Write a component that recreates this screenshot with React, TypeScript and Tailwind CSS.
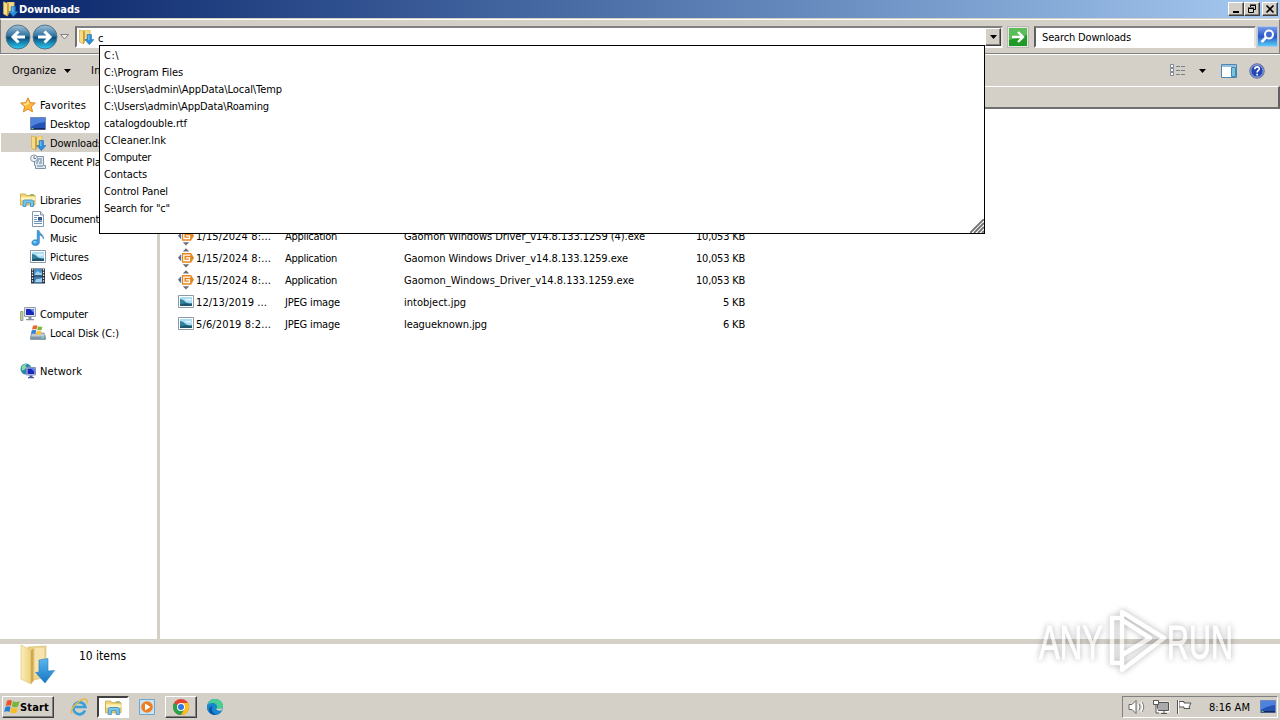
import { useLayoutEffect, useRef } from "react";
import type { ReactNode } from "react";

type LabelProps = { text: string; w: number; className?: string };

// Spreads the letters so the label takes exactly `w` pixels
function Label({ text, w, className = "pt-[2px]" }: LabelProps) {
  const ref = useRef<HTMLSpanElement>(null);
  useLayoutEffect(() => {
    const el = ref.current;
    if (!el) return;
    el.style.letterSpacing = "0px";
    const natural = el.getBoundingClientRect().width;
    el.style.letterSpacing = `${(w - natural) / text.length}px`;
  }, [text, w]);
  return (
    <span ref={ref} className={`inline-block shrink-0 whitespace-pre ${className}`}>
      {text}
    </span>
  );
}

function Icon({ size = 16, children }: { size?: number; children: ReactNode }) {
  return (
    <svg width={size} height={size} viewBox="0 0 16 16" className="block shrink-0">
      {children}
    </svg>
  );
}

function DownloadsIcon() {
  return (
    <Icon>
      <path d="M5 1h7.500v11H5z" fill="#e3bf5c" />
      <path d="M6.500 1.500h5v9h-5z" fill="#f3da8c" />
      <path d="M1.500.800 5.500 2.500V15L1.500 13z" fill="#f5dc87" stroke="#d0ab4a" strokeWidth=".7" />
      <path d="M5.200 3 6.800 2v11.500L5.200 15z" fill="#c99b36" />
      <path d="M9.200 5.500h4.300v5H16l-4.700 5.200L6.800 10.500h2.400z" fill="#2b8fd8" stroke="#1869a9" strokeWidth=".5" />
      <path d="M10.200 6.200h1.200v5h-1.200z" fill="#79c3f3" />
    </Icon>
  );
}

function LargeDownloadsIcon() {
  return (
    <svg width="40" height="42" viewBox="0 0 40 42" className="block shrink-0">
      <defs>
        <linearGradient id="folder-front" x1="0" y1="0" x2="1" y2="0">
          <stop offset="0" stopColor="#fbeebb" />
          <stop offset="1" stopColor="#ecd07c" />
        </linearGradient>
        <linearGradient id="down-arrow" x1="0" y1="0" x2="0" y2="1">
          <stop offset="0" stopColor="#5cb6ee" />
          <stop offset="1" stopColor="#1576c4" />
        </linearGradient>
      </defs>
      <path d="M10 3 28 2v31l-16 4z" fill="#ecd491" stroke="#d5b767" strokeWidth=".6" />
      <path d="M17 4h9v27h-9z" fill="#f6e4ac" />
      <path d="M3 1 13 6v34L3 35z" fill="url(#folder-front)" stroke="#dcbe6d" strokeWidth=".6" />
      <path d="m13 6 2.500-1.500V37L13 40z" fill="#d0a84c" />
      <path d="m21 16 9-1.500v12.500l6.500-.5L27 39 17.500 28.500l3.500-.5z" fill="url(#down-arrow)" stroke="#2a80c0" strokeWidth=".6" />
    </svg>
  );
}

function StarIcon() {
  return (
    <Icon>
      <path d="m8 .8 2.1 4.8 5.2.5-3.9 3.5 1.1 5.2L8 12.1l-4.5 2.7 1.1-5.2L.7 6.1l5.2-.5z" fill="#ffb93a" stroke="#dc8525" />
      <path d="m8 3 1.2 3.4-4 2L3 6.8l3.500-.3z" fill="#ffe8a3" />
    </Icon>
  );
}

function DesktopIcon() {
  return (
    <Icon>
      <path d="M.5 1.500h15v12H.500z" fill="#2453b5" stroke="#7189b7" />
      <path d="M1 2h14v4Q6 7 1 11z" fill="#4d82df" />
      <path d="M1 12h14v1.500H1z" fill="#16295b" />
      <path d="M1.500 12h2v1h-2z" fill="#7cc86b" />
    </Icon>
  );
}

function RecentIcon() {
  return (
    <Icon>
      <path d="M4.500 2.500h9v9h2v3h-10v-3h-1z" fill="#e2eaf1" stroke="#7f91a2" />
      <path d="M7 5h5M7 7h2m1 0h2M6 9h2m1 0h3M7 12h6" stroke="#607e9c" />
      <circle cx="4" cy="4.300" r="3.400" fill="#edf4fa" stroke="#8496a6" />
      <path d="M4 2v2.500h2" fill="none" stroke="#45637f" strokeWidth=".8" />
    </Icon>
  );
}

function LibrariesIcon({ size = 16 }: { size?: number }) {
  return (
    <Icon size={size}>
      <path d="M.5 13V2h5l1 1.500h8.500V13z" fill="#f2d675" stroke="#c5a244" strokeWidth=".8" />
      <path d="M1 5h14v3H1z" fill="#fdf1b5" />
      <path d="M10 2.800h4" stroke="#5aa950" />
      <path d="M3 14.500V9l1.500-1h7.500L13.500 9v5.500h-3V11h-4.500v3.500z" fill="#77c4ec" stroke="#3c8dc0" strokeWidth=".8" />
    </Icon>
  );
}

function DocumentIcon() {
  return (
    <Icon>
      <path d="M2.500.500h8L13.500 4v11.500h-11z" fill="#fff" stroke="#8796a8" />
      <path d="M10.500.500V4h3" fill="#d4e2f0" stroke="#8796a8" />
      <path d="M4 4.500h5M4 6.500h3M4 8.500h3M4 10.500h8M4 12.500h8" stroke="#6f96be" />
      <path d="M8 6h4v3.500H8z" fill="#2d5b92" />
    </Icon>
  );
}

function MusicIcon() {
  return (
    <Icon>
      <path d="M7.200.5h1.800c.5 3.500 5 3.500 4.400 8.500-.5-2.500-2-3.500-4-4v7.500c0 4-7.600 4.200-7.600.3 0-2.800 3-3.700 5.400-2.700z" fill="#3b9cdf" stroke="#2370ad" strokeWidth=".5" />
      <ellipse cx="4.800" cy="12" rx="1.800" ry="1.100" fill="#8ed2f7" />
    </Icon>
  );
}

function PictureIcon() {
  return (
    <Icon>
      <path d="M.5 1.500h15v12H.500z" fill="#fff" stroke="#8c9aa6" />
      <path d="M2 3h12v9H2z" fill="#a9def5" />
      <path d="M2 5q3 0 5 2.500t7 1.500v3H2z" fill="#337f9e" />
      <path d="M2 10.500q6-2 12 0V12H2z" fill="#1d566e" />
      <path d="M7 5h6v1.500H8z" fill="#e5f7fd" />
    </Icon>
  );
}

function VideoIcon() {
  return (
    <Icon>
      <path d="M1 .5h14v15H1z" fill="#26313c" />
      <path d="M4 1h8v6.500H4z" fill="#4a8fc5" />
      <path d="M4 8.500h8V15H4z" fill="#3b7aae" />
      <path d="M5 6q2-4 4-2t3 0v3H5zM5 14q1-4 4-3l3-1v4z" fill="#9fd2ed" />
      <path d="M2.500 1v14M13.500 1v14" stroke="#e7edf2" strokeWidth="1.300" strokeDasharray="1.500 1.300" />
    </Icon>
  );
}

function ComputerIcon() {
  return (
    <Icon>
      <path d="M4.500 1.500h11v9h-11z" fill="#e2e5ec" stroke="#949cae" />
      <path d="M6 3h8v6H6z" fill="#1828bb" />
      <path d="M10 3h4v4z" fill="#6b8cf2" />
      <path d="M8.500 11h3v2H14v1.200H6V13h2.500z" fill="#8790a0" />
      <path d="M.5 5.500h2.500v9H.500z" fill="#b8d39a" stroke="#83907b" strokeWidth=".7" />
    </Icon>
  );
}

function DiskIcon() {
  return (
    <Icon>
      <path d="m2 8-1.500 3.500v3h15v-3L14 8z" fill="#c2cbd2" stroke="#718291" strokeWidth=".7" />
      <path d="M1 11.500h14v2.800H1z" fill="#7e97a6" />
      <path d="M11 12.300h3v1h-3z" fill="#72e5e0" />
      <path d="M3 .8q2.500-1.200 4.500 0L6.500 4.500q-2-1-4.500 0z" fill="#e86b2c" />
      <path d="M8 1.200q2 1 4.500.2l-1 3.600q-2 .8-4.300-.2z" fill="#7db83e" />
      <path d="M1.800 5.200q2.500-1 4.500 0l-1 3.800q-2-1-4.500 0z" fill="#3b83d7" />
      <path d="M7 5.500q2 1 4.500.2L10.500 9.500q-2 .8-4.500-.2z" fill="#fac536" />
    </Icon>
  );
}

function NetworkIcon() {
  return (
    <Icon>
      <circle cx="6" cy="6" r="5.500" fill="#2587ac" />
      <path d="M1.500 4Q4 0 7 1L5 3l2 1-3 3-2 .5zM7 6l3-3 1 3-2 3z" fill="#8bd7a9" />
      <path d="M6.500 4.500h9v7.500h-9z" fill="#cfd5e8" stroke="#8390b6" />
      <path d="M7.500 5.500h7V11h-7z" fill="#1728c1" />
      <path d="M11 5.500h3.500V9z" fill="#6087ed" />
      <path d="M9.500 12.500h3V14H14v1.300H8V14h1.500z" fill="#4458a0" />
    </Icon>
  );
}

function AppIcon() {
  return (
    <svg width="16" height="20" viewBox="0 0 16 20" className="block shrink-0">
      <path d="M4.800 3.500 8 .3l3.200 3.200zM4.800 16.200 8 19.400l3.200-3.200z" fill="#6c6c76" />
      <path d="M3.200 6v7.500L0 9.800z" fill="#666a82" />
      <path d="M4 5h9l3 4.800-3 4.900H4z" fill="#e5851c" />
      <path d="M12.500 7.200H5.800v5.300h5.700V9.900H8" fill="none" stroke="#fff" strokeWidth="1.300" />
    </svg>
  );
}

function WindowsFlag() {
  return (
    <Icon>
      <path d="M3 1.800Q5.500.3 8 1.800L6.800 7Q4.500 5.500 1.800 7z" fill="#eb5428" />
      <path d="M9 2.300q2.500 1.500 6.500 0L14 7.500q-3 1.500-6.200 0z" fill="#72b63b" />
      <path d="M1.500 8Q4.200 6.600 6.600 8l-1.200 5q-2.500-1.500-5.300 0z" fill="#267ed4" />
      <path d="M7.600 8.500q2.800 1.500 6.200 0L12.500 13.500q-2.800 1.500-6.200 0z" fill="#f8bd20" />
    </Icon>
  );
}

function NavArrow({ back = false }: { back?: boolean }) {
  return (
    <svg width="26" height="26" viewBox="0 0 26 26" className="block shrink-0">
      <defs>
        <linearGradient id={back ? "orb-back" : "orb-next"} x1="0" y1="0" x2="0" y2="1">
          <stop offset="0" stopColor="#a3bfd3" />
          <stop offset=".45" stopColor="#2f74a3" />
          <stop offset=".52" stopColor="#0c4b79" />
          <stop offset="1" stopColor="#2bcdf5" />
        </linearGradient>
      </defs>
      <circle cx="13" cy="13" r="12" fill={back ? "url(#orb-back)" : "url(#orb-next)"} stroke="#4f7590" />
      <path
        d={back ? "M20 13H8m5.500-5.500L8 13l5.500 5.500" : "M6 13h12m-5.500-5.500L18 13l-5.500 5.500"}
        fill="none"
        stroke="#fff"
        strokeWidth="3"
      />
    </svg>
  );
}

function Caret() {
  return (
    <svg width="7" height="4" viewBox="0 0 7 4" className="block shrink-0">
      <path d="M0 0h7L3.500 4z" fill="#000" />
    </svg>
  );
}

const raised =
  "border border-t-white border-l-white border-r-[#404040] border-b-[#404040] bg-[#d4d0c8] shadow-[inset_-1px_-1px_0_#808080]";

function TitleBar() {
  return (
    <div className="flex h-[18px] items-center bg-linear-to-r from-[#0a246a] to-[#a6caf0] pl-[2px] pr-[2px]">
      <DownloadsIcon />
      <Label text="Downloads" w={61} className="ml-px pt-px font-bold text-white" />
      <div className="ml-auto flex">
        <div className={`flex h-[14px] w-4 items-center justify-center ${raised}`}>
          <svg width="10" height="10"><path d="M2 7h6v2H2z" /></svg>
        </div>
        <div className={`flex h-[14px] w-4 items-center justify-center ${raised}`}>
          <svg width="10" height="10" fill="none" stroke="#000">
            <path d="M3.500 3V1.500h5v4H7M3 1h6M1.500 4.500h5v4h-5zM1 4h6" />
          </svg>
        </div>
        <div className={`ml-[2px] flex h-[14px] w-4 items-center justify-center ${raised}`}>
          <svg width="10" height="10"><path d="m1.500 1.500 7 7m0-7-7 7" stroke="#000" strokeWidth="1.600" /></svg>
        </div>
      </div>
    </div>
  );
}

function AddressBar() {
  return (
    <div className="mt-px flex h-[35px] items-center border-x border-t border-b border-t-[#fff] border-b-[#808080] border-l-[#808080] border-r-[#808080] pl-1">
      <NavArrow back />
      <div className="ml-px"><NavArrow /></div>
      <svg width="9" height="6" className="ml-[2px] shrink-0">
        <path d="M.5.500h8L4.500 5z" fill="#eee" stroke="#808080" />
      </svg>
      <div className="ml-[6px] flex h-[22px] w-[928px] items-center border-2 border-t-[#808080] border-l-[#707070] border-r-[#e5e2dc] border-b-white bg-white">
        <div className="ml-px"><DownloadsIcon /></div>
        <Label text="c" w={6} className="ml-1 pt-[5px]" />
        <div className={`ml-auto flex h-[18px] w-4 items-center justify-center ${raised}`}><Caret /></div>
      </div>
      <div className="ml-[4px] h-[22px] w-[22px] border border-[#b9b9b9] bg-[#e8e4e0] p-px">
        <svg width="18" height="18" viewBox="0 0 18 18">
          <path d="M0 0h18v18H0z" fill="#1f9a27" />
          <path d="M0 0h18v7L0 12z" fill="#5bbd5a" />
          <path d="M3 9h10M9 4l5 5-5 5" fill="none" stroke="#fff" strokeWidth="2.400" />
        </svg>
      </div>
      <div className="ml-[5px] flex h-[22px] w-[222px] items-center border-2 border-t-[#808080] border-l-[#606060] border-r-[#e5e2dc] border-b-white bg-white pl-[6px]">
        <Label text="Search Downloads" w={89} />
      </div>
      <svg width="21" height="21" viewBox="0 0 21 21" className="ml-px shrink-0">
        <defs>
          <linearGradient id="search-face" x1="0" y1="0" x2="0" y2="1">
            <stop offset="0" stopColor="#7ba0ea" />
            <stop offset=".5" stopColor="#2b55c8" />
            <stop offset="1" stopColor="#58d2f6" />
          </linearGradient>
        </defs>
        <path d="M.5.500h20v20H.500z" fill="url(#search-face)" stroke="#b5c7e6" />
        <circle cx="12" cy="8.500" r="4" fill="#3d6ad3" stroke="#fff" strokeWidth="2" />
        <path d="m9 11.500-4.500 4.500" stroke="#fff" strokeWidth="2.600" />
      </svg>
    </div>
  );
}

function Toolbar() {
  return (
    <div className="flex h-8 items-center border-t border-white pl-3 pr-[15px]">
      <Label text="Organize" w={44} className="pt-0" />
      <div className="ml-[8px]"><Caret /></div>
      <Label text="In" w={10} className="ml-[20px] pt-0" />
      <svg width="16" height="13" className="ml-auto shrink-0">
        <path d="M.5.500h3v3h-3zM.5 4.500h3v3h-3zM.5 8.500h3v3h-3z" fill="#fff" stroke="#7b8792" />
        <path d="M6 2.500h4m1 0h4m-9 4h4m1 0h4m-9 4h4m1 0h4" stroke="#77818b" />
      </svg>
      <div className="ml-[13px]"><Caret /></div>
      <svg width="16" height="14" className="ml-[15px] shrink-0">
        <path d="M.5.500h15v13H.500z" fill="#fff" stroke="#4b86b4" />
        <path d="M1 1h14v2H1z" fill="#97c0df" />
        <path d="M10.500 3.500h4v9h-4z" fill="#77c5df" stroke="#3f87af" />
      </svg>
      <svg width="16" height="16" viewBox="0 0 16 16" className="ml-3 shrink-0">
        <circle cx="8" cy="8" r="7.300" fill="#2546b5" stroke="#777f9c" />
        <circle cx="8" cy="8" r="6.200" fill="none" stroke="#a8b9e7" />
        <path d="M5.800 6.300C5.800 3 10.500 3.300 10.300 6c-.1 1.400-2.200 1.500-2.200 3.400" fill="none" stroke="#fff" strokeWidth="1.600" />
        <path d="M7.300 10.700h1.700v1.700H7.300z" fill="#fff" />
      </svg>
    </div>
  );
}

type TreeItem = { text: string; w: number; icon: ReactNode; nested?: boolean; selected?: boolean };

const tree: TreeItem[][] = [
  [
    { text: "Favorites", w: 46, icon: <StarIcon /> },
    { text: "Desktop", w: 40, icon: <DesktopIcon />, nested: true },
    { text: "Downloads", w: 53, icon: <DownloadsIcon />, nested: true, selected: true },
    { text: "Recent Places", w: 67, icon: <RecentIcon />, nested: true },
  ],
  [
    { text: "Libraries", w: 41, icon: <LibrariesIcon /> },
    { text: "Documents", w: 54, icon: <DocumentIcon />, nested: true },
    { text: "Music", w: 27, icon: <MusicIcon />, nested: true },
    { text: "Pictures", w: 39, icon: <PictureIcon />, nested: true },
    { text: "Videos", w: 32, icon: <VideoIcon />, nested: true },
  ],
  [
    { text: "Computer", w: 48, icon: <ComputerIcon /> },
    { text: "Local Disk (C:)", w: 69, icon: <DiskIcon />, nested: true },
  ],
  [{ text: "Network", w: 42, icon: <NetworkIcon /> }],
];

function Sidebar() {
  return (
    <div className="flex w-[160px] shrink-0 flex-col gap-[19px] border-r-[3px] border-[#d4d0c8] bg-white pt-[9px] pl-px">
      {tree.map((group, i) => (
        <div key={i}>
          {group.map((item) => (
            <div
              key={item.text}
              className={`flex h-[19px] items-center gap-1 ${item.nested ? "pl-[29px]" : "pl-[19px]"} ${item.selected ? "bg-[#d4d0c8]" : ""}`}
            >
              {item.icon}
              <Label text={item.text} w={item.w} />
            </div>
          ))}
        </div>
      ))}
    </div>
  );
}

const files = [
  { date: "1/15/2024 8:...", dw: 75, app: true, name: "Gaomon Windows Driver_v14.8.133.1259 (4).exe", nw: 241, size: "10,053 KB", sw: 49 },
  { date: "1/15/2024 8:...", dw: 75, app: true, name: "Gaomon Windows Driver_v14.8.133.1259.exe", nw: 224, size: "10,053 KB", sw: 49 },
  { date: "1/15/2024 8:...", dw: 75, app: true, name: "Gaomon_Windows_Driver_v14.8.133.1259.exe", nw: 230, size: "10,053 KB", sw: 49 },
  { date: "12/13/2019 ...", dw: 71, app: false, name: "intobject.jpg", nw: 62, size: "5 KB", sw: 22 },
  { date: "5/6/2019 8:2...", dw: 75, app: false, name: "leagueknown.jpg", nw: 83, size: "6 KB", sw: 22 },
];

function FileList() {
  return (
    <div className="flex-1 bg-white">
      <div className="h-[23px] border-t border-r-2 border-b-2 border-t-white border-r-[#606060] border-b-[#707070] bg-[#d4d0c8]" />
      <div className="pt-[116px]">
        {files.map((file) => (
          <div key={file.name} className="flex h-[22px] items-center pl-[18px]">
            {file.app ? <AppIcon /> : <PictureIcon />}
            <div className="ml-[2px] w-[89px]"><Label text={file.date} w={file.dw} /></div>
            <div className="w-[119px]">
              <Label text={file.app ? "Application" : "JPEG image"} w={file.app ? 52 : 55} />
            </div>
            <div className="w-[260px]"><Label text={file.name} w={file.nw} /></div>
            <div className="flex w-[81px] justify-end"><Label text={file.size} w={file.sw} /></div>
          </div>
        ))}
      </div>
    </div>
  );
}

const suggestions = [
  { text: "C:\\", w: 15 },
  { text: "C:\\Program Files", w: 79 },
  { text: "C:\\Users\\admin\\AppData\\Local\\Temp", w: 178 },
  { text: "C:\\Users\\admin\\AppData\\Roaming", w: 165 },
  { text: "catalogdouble.rtf", w: 83 },
  { text: "CCleaner.lnk", w: 62 },
  { text: "Computer", w: 47 },
  { text: "Contacts", w: 43 },
  { text: "Control Panel", w: 64 },
  { text: 'Search for "c"', w: 66 },
];

function Suggestions() {
  return (
    <div className="absolute top-[45px] left-[99px] h-[189px] w-[886px] border border-black bg-white pl-1">
      {suggestions.map((item) => (
        <div key={item.text} className="flex h-[17px] items-center">
          <Label text={item.text} w={item.w} className="pt-[3px]" />
        </div>
      ))}
      <svg width="14" height="14" className="absolute right-0 bottom-0">
        <path d="M0 14 14 0M4 14 14 4M8 14l6-6M12 14l2-2" stroke="#707070" strokeWidth="1.800" />
      </svg>
    </div>
  );
}

function Watermark() {
  return (
    <svg
      width="240"
      height="80"
      viewBox="0 0 240 80"
      className="absolute top-[603px] left-[1030px] opacity-60 drop-shadow-[0_0_3px_rgba(0,0,0,0.5)]"
    >
      <g fill="#fff" stroke="#fff" strokeWidth="1" fontFamily="Liberation Sans" fontSize="48">
        <text x="9" y="56" textLength="64" lengthAdjust="spacingAndGlyphs">ANY</text>
        <text x="137" y="56" textLength="66" lengthAdjust="spacingAndGlyphs">RUN</text>
      </g>
      <path
        d="M92 15h-10v45h10M92 54V9l42 26-42 32V52l28-17-28-18"
        fill="none"
        stroke="#fff"
        strokeWidth="4.500"
        strokeLinejoin="round"
      />
    </svg>
  );
}

function Taskbar() {
  return (
    <div className="flex h-7 items-center border-t border-white pt-px pl-[2px] pr-[2px]">
      <div className={`flex h-[22px] w-[52px] items-center pl-px ${raised}`}>
        <WindowsFlag />
        <Label text="Start" w={29} className="pt-px font-bold" />
      </div>
      <svg width="18" height="18" viewBox="0 0 18 18" className="ml-[16px] shrink-0">
        <path d="M15 12.500A6 6 0 1 1 15.300 9H5" fill="none" stroke="#389fd9" strokeWidth="2.700" />
        <path d="M2 15.500C-1.500 11 12-1 16.500 1.500q1.500 1 0 4" fill="none" stroke="#e8ba41" strokeWidth="1.400" />
      </svg>
      <div className="ml-[9px] flex h-[22px] w-8 items-center justify-center border-2 border-t-[#404040] border-l-[#404040] border-r-white border-b-white bg-white">
        <LibrariesIcon size={17} />
      </div>
      <svg width="16" height="16" viewBox="0 0 16 16" className="ml-[10px] shrink-0">
        <path d="M.5.500h15v15H.500z" fill="#c9e4f5" stroke="#6fa5ce" />
        <circle cx="8" cy="8" r="5.800" fill="#ed7d20" />
        <path d="m6 4.500 5.500 3.500L6 11.500z" fill="#fff" />
      </svg>
      <div className={`ml-[10px] flex h-[22px] w-8 items-center justify-center ${raised}`}>
        <Icon>
          <circle cx="8" cy="8" r="8" fill="#e34133" />
          <path d="M8 8 1.070 4A8 8 0 0 0 8 16l3.500-6z" fill="#2ba24c" />
          <path d="M8 4h6.930A8 8 0 0 1 8 16l3.500-6z" fill="#fbc116" />
          <circle cx="8" cy="8" r="4" fill="#fff" />
          <circle cx="8" cy="8" r="3" fill="#3475e0" />
        </Icon>
      </div>
      <div className="ml-[10px]">
        <Icon>
          <circle cx="8" cy="8" r="8" fill="#1577c7" />
          <path d="M1 5Q3 0 8 0c5 0 9 4 7.800 8-.8 3-5.500 3-6.300 1.500C11 8 9 5 5 5q-3 0-4 2z" fill="#48cf91" />
          <path d="M0 8q1-4 5-4c5 0 6 4 4.500 5.500-1 1 .5 3 5 2Q11 17 6 15.500 0 14 0 8z" fill="#1687cf" />
          <path d="M5.500 7Q3 12 9 15.800 2 16 2 10q0-2 3.500-3z" fill="#0b55a2" />
          <path d="M9.500 9.500C8.500 11 11 12 14.500 11.500L16 9q-3 1.500-6.500.5z" fill="#d4d0c8" />
        </Icon>
      </div>
      <div className="ml-auto flex h-[22px] w-[156px] items-center border border-t-[#808080] border-l-[#808080] border-r-white border-b-white pl-[5px] pr-px">
        <svg width="18" height="16" fill="none" stroke="#fff" strokeWidth="2">
          <path d="M1 5.500h3l4-4v13l-4-4H1z" fill="#fff" stroke="#666" strokeWidth="1" />
          <path d="M10 5q2 3 0 6m3-8q3.500 5 0 10" />
          <path d="M11 5q2 3 0 6m3-8q3.500 5 0 10" stroke="#777" strokeWidth="1" />
        </svg>
        <svg width="17" height="16" className="ml-[7px]">
          <path d="M4.500 3.500h11v9h-11z" fill="#b4b4b4" stroke="#fff" strokeWidth="2" />
          <path d="M4.500 3.500h11v8h-11zM8 14.500h6M11 12v2" fill="#aaa" stroke="#555" />
          <path d="M.5 1.500h5v4h-5zM3 6v8h3" fill="#fff" stroke="#555" />
        </svg>
        <svg width="17" height="16" className="ml-[6px]">
          <path d="M1.500 1v14M3 2.500h5v1.500h7l-2 4 1 1.500H8V8H3z" fill="#fff" stroke="#555" />
          <path d="M2.500 1v14" stroke="#fff" />
        </svg>
        <Label text="8:16 AM" w={41} className="ml-[16px] pt-px" />
        <div className="ml-auto"><DesktopIcon /></div>
      </div>
    </div>
  );
}

export default function App() {
  return (
    <div className="relative flex h-[720px] w-[1280px] flex-col overflow-hidden bg-[#d4d0c8] font-['DejaVu_Sans_Condensed','DejaVu_Sans',sans-serif] text-[11px] leading-[14px] text-black">
      <TitleBar />
      <AddressBar />
      <Toolbar />
      <div className="flex h-[553px]">
        <Sidebar />
        <FileList />
      </div>
      <div className="mt-[5px] flex h-12 bg-white pl-[18px]">
        <LargeDownloadsIcon />
        <Label text="10 items" w={47} className="ml-[21px] mt-1 text-xs" />
      </div>
      <div className="flex-1" />
      <Taskbar />
      <Suggestions />
      <Watermark />
    </div>
  );
}
